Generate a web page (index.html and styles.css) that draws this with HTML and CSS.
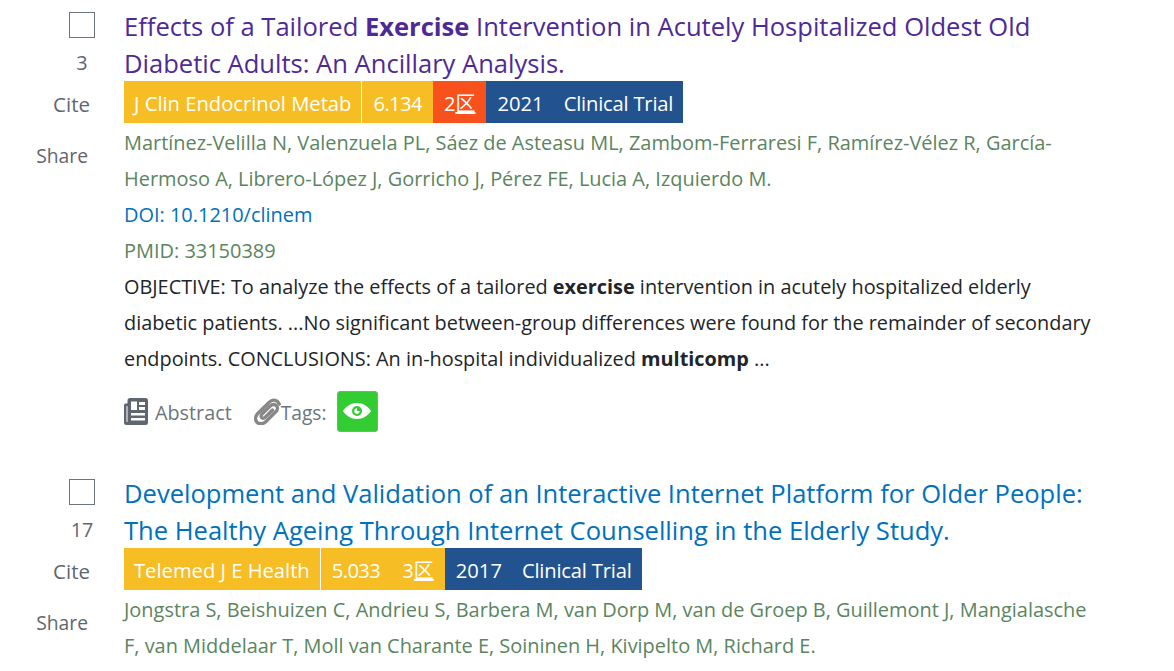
FILE: index.html
```html
<!DOCTYPE html>
<html lang="en">
<head>
<meta charset="utf-8">
<title>Search results</title>
<link rel="stylesheet" href="styles.css">
</head>
<body>
<main class="results">
  <article class="result">
    <div class="side">
      <span class="check"></span>
      <span class="num">3</span>
      <span class="act">Cite</span>
      <span class="act share">Share</span>
    </div>
    <div class="body">
      <h2 class="title visited">Effects of a Tailored <b>Exercise</b> Intervention in Acutely Hospitalized Oldest Old Diabetic Adults: An Ancillary Analysis.</h2>
      <div class="tags">
        <span class="tag yellow journal">J Clin Endocrinol Metab</span><span class="tag yellow if">6.134</span><span class="tag red zone">2<span class="cjk">区</span></span><span class="tag blue year">2021</span><span class="tag blue type">Clinical Trial</span>
      </div>
      <p class="authors">Martínez-Velilla N, Valenzuela PL, Sáez de Asteasu ML, Zambom-Ferraresi F, Ramírez-Vélez R, García-Hermoso A, Librero-López J, Gorricho J, Pérez FE, Lucia A, Izquierdo M.</p>
      <p class="doi">DOI: <span>10.1210/clinem</span></p>
      <p class="pmid">PMID: 33150389</p>
      <p class="abstract">OBJECTIVE: To analyze the effects of a tailored <b>exercise</b> intervention in acutely hospitalized elderly diabetic patients. ...No significant between-group differences were found for the remainder of secondary endpoints. CONCLUSIONS: An in-hospital individualized <b>multicomp</b> ...</p>
      <div class="actions">
        <svg class="ico news" viewBox="0 0 24 27" aria-hidden="true"><path fill-rule="evenodd" d="M6 0H21.500A2.500 2.500 0 0 1 24 2.500V24.500A2.500 2.500 0 0 1 21.500 27H2.500A2.500 2.500 0 0 1 0 24.500V7A1.500 1.500 0 0 1 1.500 5.500H3.500V2.500A2.500 2.500 0 0 1 6 0ZM3.500 8H2.500V23.500A0.500 0.500 0 0 0 3.500 23.500ZM7 3.500V12H13V3.500ZM15 4V7H21V4ZM15 9V12H21V9ZM7 15V17.500H21V15ZM7 20V22.500H21V20Z"/></svg>
        <span class="lbl abs">Abstract</span>
        <svg class="clip" viewBox="0 0 27 27" aria-hidden="true"><path fill="none" stroke="currentColor" stroke-width="3.300" stroke-linecap="round" d="M25.300 6C22.500 1 18 1.300 15 4.300L3.800 15.500C0.800 18.500 1 22.500 3.200 24.500C5.500 26.500 9.500 26 12 23.500L22 13.500C24 11.500 24 9 22.200 7.500C20.300 6 18 6.300 16.200 8L8 16.200C6.700 17.500 6.800 19 7.800 19.800C8.800 20.600 10 20.400 11 19.400L18.500 12"/></svg>
        <span class="lbl tagl">Tags:</span>
        <span class="eye-btn"><svg viewBox="0 0 28 16" aria-hidden="true"><path fill="#fff" fill-rule="evenodd" d="M14 0C20 0 25 3.400 28 8C25 12.600 20 16 14 16C8 16 3 12.600 0 8C3 3.400 8 0 14 0ZM14 3A5 5 0 1 0 14 13A5 5 0 1 0 14 3Z"/><path fill="#fff" d="M14 5.300A2.700 2.700 0 1 0 16.700 8H14Z"/></svg></span>
      </div>
    </div>
  </article>
  <article class="result second">
    <div class="side">
      <span class="check"></span>
      <span class="num">17</span>
      <span class="act">Cite</span>
      <span class="act share">Share</span>
    </div>
    <div class="body">
      <h2 class="title">Development and Validation of an Interactive Internet Platform for Older People: The Healthy Ageing Through Internet Counselling in the Elderly Study.</h2>
      <div class="tags">
        <span class="tag yellow journal">Telemed J E Health</span><span class="tag yellow if">5.033</span><span class="tag yellow zone">3<span class="cjk">区</span></span><span class="tag blue year">2017</span><span class="tag blue type">Clinical Trial</span>
      </div>
      <p class="authors">Jongstra S, Beishuizen C, Andrieu S, Barbera M, van Dorp M, van de Groep B, Guillemont J, Mangialasche F, van Middelaar T, Moll van Charante E, Soininen H, Kivipelto M, Richard E.</p>
    </div>
  </article>
</main>
</body>
</html>
```
FILE: styles.css
```css
* { box-sizing: border-box; }
html, body { margin: 0; padding: 0; height: 671px; overflow: hidden; background: #fff; }
body { font-family: "Open Sans", "Noto Sans", "Noto Sans CJK SC", sans-serif; color: #212529; }
.results { padding: 8px 0 0 0; }
.result { display: flex; }
.second { margin-top: 43px; }
.side { width: 124px; flex: none; display: flex; flex-direction: column; align-items: flex-end; padding-right: 29px; }
.check { width: 26px; height: 26px; border: 1px solid #6c757d; margin-top: 4px; }
.num { width: 26px; text-align: center; font-size: 19.8px; line-height: 26px; color: #5f6670; margin-top: 12px; }
.act { font-size: 20.5px; line-height: 26px; color: #5f6670; margin-top: 15px; margin-right: 5px; }
.share { font-size: 19.3px; margin-top: 26px; margin-right: 7px; }
.body { width: 972px; flex: none; }
.title { margin: 0; font-size: 25.55px; line-height: 37px; font-weight: 400; color: #0071bc; }
.title b { font-weight: 700; }
.visited { color: #4e2a96; }
.tags { display: flex; height: 42px; margin: -1px 0 2px; font-size: 20.2px; color: #fff; line-height: 40px; white-space: nowrap; }
.tag { display: block; height: 42px; padding: 2px 10px 0; }
.yellow { background: #f6bd25; }
.red { background: #f8511c; }
.blue { background: #23538f; }
.journal { border-right: 1px solid #fff; }
.if { padding: 2px 11px 0; letter-spacing: -0.6px; }
.zone { padding: 2px 11px 0; }
.year { padding: 2px 10px 0 11px; }
.type { letter-spacing: -0.2px; }
.cjk { font-family: "Noto Sans CJK SC", sans-serif; font-size: 20px; text-decoration: underline; }
.authors, .doi, .pmid { margin: 0; font-size: 19.94px; line-height: 36px; color: #5b8560; }
.doi { color: #0071bc; }
.abstract { margin: 0; font-size: 19.87px; line-height: 36px; color: #212529; }
.abstract b { font-weight: 700; }
.actions { display: flex; align-items: center; margin-top: 13px; height: 42px; color: #6c757d; font-size: 19.8px; }
.lbl { padding-top: 2px; }
.ico { width: 24px; height: 27px; fill: #5f6670; flex: none; }
.news { margin-right: 7px; }
.abs { margin-right: 22px; }
.clip { width: 27px; height: 27px; color: #888; flex: none; }
.tagl { font-size: 19.2px; }
.eye-btn { width: 41px; height: 41px; margin-left: 10px; background: #33cc33; border: 1px solid #999; border-radius: 3px; display: flex; align-items: center; justify-content: center; }
.eye-btn svg { width: 28px; height: 16px; }
```
